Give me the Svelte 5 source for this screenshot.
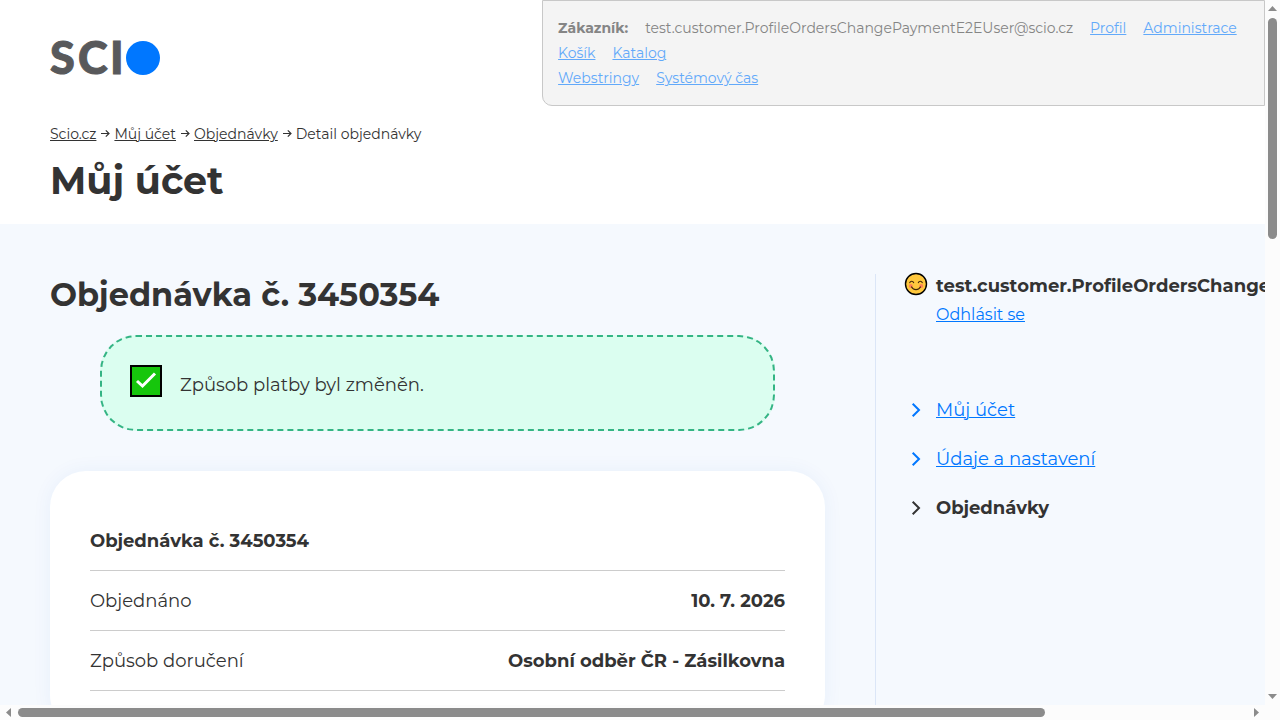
<script lang="ts">
    const customerLinks = [
        [
            { label: "Profil", href: "#profil" },
            { label: "Administrace", href: "#administrace" },
        ],
        [
            { label: "Košík", href: "#kosik" },
            { label: "Katalog", href: "#katalog" },
        ],
        [
            { label: "Webstringy", href: "#webstringy" },
            { label: "Systémový čas", href: "#cas" },
        ],
    ];

    const breadcrumbs = [
        { label: "Scio.cz", href: "#scio" },
        { label: "Můj účet", href: "#ucet" },
        { label: "Objednávky", href: "#objednavky" },
    ];

    const menu = [
        { label: "Můj účet", href: "#ucet", active: false },
        { label: "Údaje a nastavení", href: "#udaje", active: false },
        { label: "Objednávky", href: "#objednavky", active: true },
    ];

    const order = [
        { label: "Objednáno", value: "10. 7. 2026" },
        { label: "Způsob doručení", value: "Osobní odběr ČR - Zásilkovna" },
    ];

    const email = "test.customer.ProfileOrdersChangePaymentE2EUser@scio.cz";

    // visible share of the page in each direction, in percent
    const scroll = { x: 83.6, y: 33 };
</script>

<div class="window">
    <div class="viewport">
        <header class="header">
            <div class="topbar">
                <a class="logo" href="#home" aria-label="Scio">
                    <svg viewBox="0 0 110 36" width="110" height="36">
                        <text x="0 28 60" y="34">SCI</text>
                        <circle cx="93" cy="18" r="17" fill="#0077ff" />
                    </svg>
                </a>
                <div class="customer">
                    {#each customerLinks as row, i}
                        <div class="customer-row">
                            {#if i === 0}
                                <strong>Zákazník:</strong>
                                <span>{email}</span>
                            {/if}
                            {#each row as link}
                                <a href={link.href}>{link.label}</a>
                            {/each}
                        </div>
                    {/each}
                </div>
            </div>
            <nav class="breadcrumbs">
                {#each breadcrumbs as crumb}
                    <a href={crumb.href}>{crumb.label}</a>
                    <svg viewBox="0 0 10 10" width="10" height="10">
                        <path d="M1 4.5H9M5.8 1.3L9 4.5L5.8 7.7" fill="none" stroke="currentColor" stroke-width="1.2" />
                    </svg>
                {/each}
                <span>Detail objednávky</span>
            </nav>
            <h1>Můj účet</h1>
        </header>

        <div class="content">
            <main>
                <h2>Objednávka č. 3450354</h2>
                <div class="alert" role="status">
                    <svg viewBox="0 0 32 32" width="32" height="32">
                        <rect x="1" y="1" width="30" height="30" fill="#16c60c" stroke="#000" stroke-width="2" />
                        <path d="M7 16L12.5 21L25 8.5" fill="none" stroke="#fff" stroke-width="3" />
                    </svg>
                    <span>Způsob platby byl změněn.</span>
                </div>
                <section class="card">
                    <table>
                        <thead>
                            <tr><th colspan="2">Objednávka č. 3450354</th></tr>
                        </thead>
                        <tbody>
                            {#each order as item}
                                <tr>
                                    <td>{item.label}</td>
                                    <td class="value">{item.value}</td>
                                </tr>
                            {/each}
                        </tbody>
                    </table>
                </section>
            </main>

            <aside>
                <div class="user">
                    <svg viewBox="0 0 24 24" width="24" height="24">
                        <circle cx="12" cy="10" r="10.5" fill="#ffc83d" stroke="#000" stroke-width="1.4" />
                        <circle cx="6.8" cy="12" r="2" fill="#ff8257" />
                        <circle cx="17.2" cy="12" r="2" fill="#ff8257" />
                        <g fill="none" stroke="#40270a" stroke-width="1.2" stroke-linecap="round">
                            <path d="M5.8 8.6C6.6 6.8 8.8 6.8 9.6 8.6" />
                            <path d="M14.4 8.6C15.2 6.8 17.4 6.8 18.2 8.6" />
                            <path d="M7.6 13C9.6 16.6 14.4 16.6 16.4 13" />
                        </g>
                    </svg>
                    <div>
                        <strong>{email}</strong>
                        <a href="#odhlasit">Odhlásit se</a>
                    </div>
                </div>
                <nav class="menu">
                    {#each menu as item}
                        <a href={item.href} class:active={item.active}>
                            <svg viewBox="0 0 24 24" width="24" height="24">
                                <path d="M8.7 5.8L15 12L8.7 18.2" fill="none" stroke="currentColor" stroke-width="2" />
                            </svg>
                            <span>{item.label}</span>
                        </a>
                    {/each}
                </nav>
            </aside>
        </div>
    </div>

    <div class="bar bar-y">
        <svg viewBox="0 0 9 5" width="9" height="5"><path d="M0 5L4.5 0L9 5Z" /></svg>
        <div class="track"><div class="thumb" style:height="{scroll.y}%"></div></div>
        <svg viewBox="0 0 9 5" width="9" height="5"><path d="M0 0L4.5 5L9 0Z" /></svg>
    </div>
    <div class="bar bar-x">
        <svg viewBox="0 0 5 9" width="5" height="9"><path d="M5 0L0 4.5L5 9Z" /></svg>
        <div class="track"><div class="thumb" style:width="{scroll.x}%"></div></div>
        <svg viewBox="0 0 5 9" width="5" height="9"><path d="M0 0L5 4.5L0 9Z" /></svg>
    </div>
</div>

<style>
    :global(body) {
        margin: 0;
    }
    .window {
        display: grid;
        grid-template-columns: minmax(0, 1fr) 15px;
        grid-template-rows: minmax(0, 1fr) 15px;
        height: 100vh;
        background: #fcfcfc;
        color: #333;
        font-family: Montserrat, Inter, sans-serif;
        font-size: 18px;
        font-weight: 400;
        line-height: 30px;
    }
    .viewport {
        overflow: hidden;
        background: #f5f9fe;
    }
    a {
        color: #0077ff;
        text-decoration-thickness: 1px;
    }
    svg {
        display: block;
        flex-shrink: 0;
        overflow: visible;
    }
    h1,
    h2 {
        margin: 0;
        font-weight: 700;
    }

    .header {
        padding-left: 50px;
        padding-bottom: 18px;
        background: #fff;
    }
    .topbar {
        display: flex;
        justify-content: space-between;
        align-items: flex-start;
    }
    .logo {
        padding-top: 40px;
    }
    .logo text {
        font-family: Lato, sans-serif;
        font-size: 45px;
        font-weight: 900;
        fill: #58595b;
        stroke: #58595b;
        stroke-width: 1;
    }
    .customer {
        box-sizing: border-box;
        min-width: 59.5%;
        padding: 15px 15px 14px;
        background: #f4f4f4;
        border: 1px solid #c8c8c8;
        border-bottom-left-radius: 10px;
        font-size: 14px;
        line-height: 25px;
        color: #858585;
    }
    .customer-row {
        display: flex;
        gap: 17px;
        white-space: nowrap;
    }
    .customer strong {
        font-weight: 700;
    }
    .customer a {
        color: #62a9fa;
    }

    .breadcrumbs {
        display: flex;
        align-items: center;
        gap: 4px;
        padding-top: 18px;
        font-size: 14px;
        line-height: 20px;
    }
    .breadcrumbs a {
        color: inherit;
    }
    h1 {
        padding-top: 12px;
        font-size: 38px;
        line-height: 50px;
    }

    .content {
        display: grid;
        grid-template-columns: minmax(0, 1fr) 340px;
        gap: 50px;
        padding: 50px;
    }
    h2 {
        font-size: 32px;
        line-height: 41px;
    }
    .alert {
        display: flex;
        align-items: flex-start;
        gap: 18px;
        margin: 20px 50px 40px;
        padding: 28px;
        background: #dbfef0;
        border: 2px dashed #34b484;
        border-radius: 36px;
    }
    .alert span {
        padding-top: 4px;
        line-height: 32px;
    }
    .card {
        padding: 40px;
        background: #fff;
        border-radius: 36px;
        box-shadow: 0 0 20px rgba(0, 90, 200, 0.06);
    }
    table {
        width: 100%;
        border-collapse: collapse;
    }
    th,
    td {
        height: 59px;
        padding: 0;
        border-bottom: 1px solid #ccc;
        text-align: left;
    }
    th {
        font-weight: 700;
    }
    .value {
        font-weight: 700;
        text-align: right;
    }

    aside {
        padding-left: 28px;
        border-left: 1px solid #dbe6f7;
        white-space: nowrap;
    }
    .user {
        display: flex;
        gap: 8px;
    }
    .user strong {
        display: block;
        line-height: 24px;
        font-weight: 700;
    }
    .user a {
        display: block;
        padding-top: 4px;
        font-size: 16px;
        line-height: 25px;
    }
    .menu {
        display: flex;
        flex-direction: column;
        gap: 19px;
        padding-top: 68px;
    }
    .menu a {
        display: flex;
        align-items: center;
        gap: 8px;
    }
    .menu .active {
        color: #333;
        font-weight: 700;
        text-decoration: none;
    }

    .bar {
        display: flex;
        align-items: center;
        justify-content: space-between;
        gap: 7px;
        fill: #8b8b8b;
    }
    .bar-y {
        flex-direction: column;
        padding: 6px 0;
    }
    .bar-x {
        padding: 0 6px;
    }
    .track {
        flex: 1;
    }
    .thumb {
        background: #8b8b8b;
        border-radius: 5px;
    }
    .bar-y .thumb {
        width: 9px;
    }
    .bar-x .thumb {
        height: 9px;
    }
</style>
